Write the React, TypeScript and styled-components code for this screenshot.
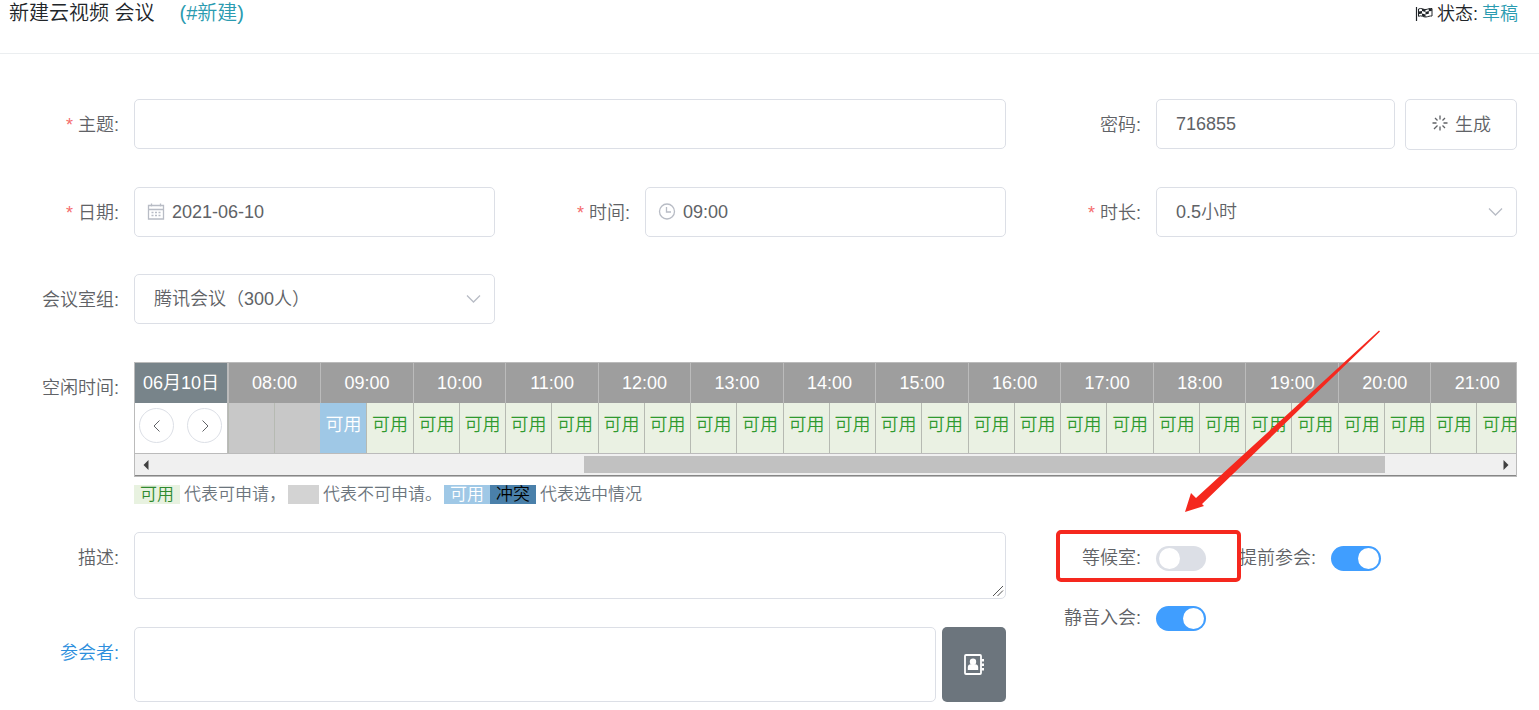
import React from "react";
import styled, { createGlobalStyle, css } from "styled-components";

const GlobalStyle = createGlobalStyle`
  *, *::before, *::after { box-sizing: border-box; }
  body {
    margin: 0;
    background: #fff;
    color: #606266;
    font-family: "Liberation Sans", "Noto Sans CJK SC", sans-serif;
    font-size: 18px;
    font-weight: 350;
  }
  input, select, textarea, button { font: inherit; color: inherit; }
`;

const Page = styled.div`
  position: relative;
  min-width: 1200px;
  overflow-x: hidden;
`;

const Header = styled.header`
  display: flex;
  justify-content: space-between;
  height: 54px;
  padding: 0 21px 0 9px;
  border-bottom: 1px solid #ebeef0;
  color: #212529;
  line-height: 26px;
`;

const Title = styled.h1`
  display: flex;
  gap: 25px;
  margin: 0;
  font-size: 20px;
  font-weight: 350;
`;

const Accent = styled.span`
  color: #2a9bb0;
`;

const Status = styled.div`
  display: flex;
  align-items: center;
  gap: 4px;
  height: 28px;
`;

const Form = styled.form`
  display: flex;
  flex-direction: column;
  padding: 45px 22px 8px 0;
`;

const Row = styled.div<{ $space?: number }>`
  display: grid;
  grid-template-columns: repeat(3, minmax(0, 1fr));
  column-gap: 16px;
  margin-bottom: ${(p) => p.$space ?? 37}px;
`;

const Field = styled.div<{ $span?: number }>`
  display: flex;
  align-items: flex-start;
  grid-column: span ${(p) => p.$span ?? 1};
`;

const Label = styled.label<{ $required?: boolean; $link?: boolean }>`
  flex: none;
  width: 134px;
  padding: 2px 15px 0 0;
  line-height: 48px;
  text-align: right;
  white-space: nowrap;
  ${(p) => p.$link && css`color: #2d8fdd;`}
  ${(p) =>
    p.$required &&
    css`
      &::before {
        content: "*";
        margin-right: 5px;
        color: #f56c6c;
      }
    `}
`;

const control = css`
  width: 100%;
  min-width: 0;
  border: 1px solid #dcdfe6;
  border-radius: 5px;
  background: #fff;
  outline: none;
`;

const TextInput = styled.input<{ $icon?: boolean }>`
  ${control}
  height: 50px;
  padding: 0 19px 0 ${(p) => (p.$icon ? 37 : 19)}px;
`;

const SelectInput = styled.select`
  ${control}
  height: 50px;
  padding: 0 44px 0 19px;
  appearance: none;
`;

const TextArea = styled.textarea<{ $tall?: boolean }>`
  ${control}
  display: block;
  height: ${(p) => (p.$tall ? 75 : 67)}px;
  padding: 6px 19px;
  resize: ${(p) => (p.$tall ? "none" : "vertical")};
  &::-webkit-resizer { background: transparent; }
`;

const ControlBox = styled.div`
  position: relative;
  flex: 1;
  min-width: 0;
`;

const InnerIcon = styled.svg<{ $end?: boolean }>`
  position: absolute;
  top: 16px;
  ${(p) => (p.$end ? "right: 13px;" : "left: 13px;")}
  fill: none;
  stroke: #b8bcc5;
  stroke-width: 1.3;
  pointer-events: none;
`;

const Grip = styled.svg`
  position: absolute;
  right: 2px;
  bottom: 2px;
  pointer-events: none;
`;

const GenerateButton = styled.button`
  display: flex;
  flex: none;
  align-items: center;
  justify-content: center;
  gap: 6px;
  width: 112px;
  height: 51px;
  margin-left: 10px;
  padding: 0 0 3px;
  border: 1px solid #dcdfe6;
  border-radius: 5px;
  background: #fff;
`;

const Scheduler = styled.div`
  flex: 1;
  min-width: 0;
`;

const Board = styled.div`
  border: 1px solid #bbb;
`;

const BoardBody = styled.div`
  display: flex;
  border-bottom: 1px solid #bbb;
`;

const DayColumn = styled.div`
  flex: none;
  width: 93px;
  border-right: 1px solid #bbb;
`;

const DayHead = styled.div`
  height: 40px;
  background: #78848a;
  color: #fff;
  font-weight: 400;
  line-height: 40px;
  text-align: center;
`;

const DayNav = styled.div`
  display: flex;
  gap: 13px;
  padding: 5px 4px;
`;

const RoundButton = styled.button`
  display: flex;
  flex: none;
  align-items: center;
  justify-content: center;
  width: 35px;
  height: 35px;
  padding: 0;
  border: 1px solid #dcdfe6;
  border-radius: 50%;
  background: #fff;
`;

const Timeline = styled.div`
  flex: 1;
  min-width: 0;
  overflow: hidden;
`;

const Slots = styled.table`
  width: 1295px;
  border-collapse: separate;
  border-spacing: 0;
  table-layout: fixed;
`;

const Col = styled.col<{ $w: number }>`
  width: ${(p) => p.$w}px;
`;

const HourHead = styled.th`
  height: 40px;
  padding: 0;
  border-left: 1px solid #bbb;
  background: #9e9e9e;
  color: #fff;
  font-weight: 400;
  line-height: 40px;
`;

type SlotState = "free" | "off" | "picked";

const slotColors: Record<SlotState, string> = {
  free: "background: #eaf1e3; color: #2f9a2f;",
  off: "background: #c8c8c8;",
  picked: "background: #9fc8e6; color: #fff; border-left-color: #9fc8e6;",
};

const Slot = styled.td<{ $state: SlotState }>`
  height: 50px;
  padding: 0 0 6px;
  overflow: hidden;
  border-left: 1px solid #b6bab2;
  line-height: 44px;
  text-align: center;
  white-space: nowrap;
  ${(p) => slotColors[p.$state]}
`;

const ScrollBar = styled.div`
  display: flex;
  height: 22px;
  border-bottom: 1px solid #868686;
  background: #f0f0f0;
`;

const ScrollArrow = styled.button`
  display: flex;
  flex: none;
  align-items: center;
  justify-content: center;
  width: 21px;
  padding: 0;
  border: 0;
  background: none;
`;

const ScrollTrack = styled.div`
  flex: 1;
  padding: 2px 0;
`;

const ScrollThumb = styled.div`
  width: 59.8%;
  height: 17px;
  margin-left: 32%;
  background: #c1c1c1;
`;

const Legend = styled.div`
  display: flex;
  align-items: center;
  margin-top: 8px;
  color: #6c757d;
  font-size: 17px;
  line-height: 19px;
`;

const Chip = styled.span<{ $kind: "free" | "off" | "picked" | "clash" }>`
  width: ${(p) => (p.$kind === "off" ? 31 : 46)}px;
  height: 19px;
  text-align: center;
  ${(p) =>
    ({
      free: "background: #e8f2e0; color: #2f8a2f;",
      off: "background: #d3d3d3;",
      picked: "background: #9fc8e6; color: #fff;",
      clash: "background: #4a80aa; color: #000;",
    })[p.$kind]}
`;

const LegendText = styled.span`
  margin: 0 2px 0 4px;
`;

const Stack = styled.div<{ $span?: number; $gap: number }>`
  display: flex;
  flex-direction: column;
  grid-column: span ${(p) => p.$span ?? 1};
  gap: ${(p) => p.$gap}px;
`;

const BookButton = styled.button`
  display: flex;
  flex: none;
  align-items: center;
  justify-content: center;
  width: 64px;
  height: 75px;
  margin-left: 6px;
  padding: 0;
  border: 0;
  border-radius: 5px;
  background: #6c757d;
`;

const SwitchRow = styled.div`
  position: relative;
  display: flex;
  align-items: flex-start;
  height: 52px;
`;

const SideLabel = styled(Label)`
  width: 125px;
`;

const Switch = styled.input`
  position: relative;
  flex: none;
  width: 50px;
  height: 25px;
  margin: 14px 0 0;
  border-radius: 13px;
  background: #dcdfe6;
  appearance: none;
  &::before {
    content: "";
    position: absolute;
    top: 2px;
    left: 3px;
    width: 21px;
    height: 21px;
    border-radius: 50%;
    background: #fff;
  }
  &:checked { background: #409eff; }
  &:checked::before { left: 27px; }
`;

const Highlight = styled.div`
  position: absolute;
  top: -2px;
  left: 34px;
  width: 185px;
  height: 52px;
  border: 4px solid #f5281e;
  border-radius: 5px;
  pointer-events: none;
`;

const Arrow = styled.svg`
  position: absolute;
  bottom: 72px;
  left: 163px;
  pointer-events: none;
`;

const hours = Array.from({ length: 14 }, (_, i) => `${String(i + 8).padStart(2, "0")}:00`);

const slotState = (i: number): SlotState => (i < 2 ? "off" : i === 2 ? "picked" : "free");

export default function App() {
  return (
    <Page>
      <GlobalStyle />
      <Header>
        <Title>
          <span>新建云视频 会议</span>
          <Accent>(#新建)</Accent>
        </Title>
        <Status>
          <svg width="18" height="16" viewBox="0 0 18 16" aria-hidden="true">
            <path d="M1.500 1v14" stroke="#212529" strokeWidth="1.200" />
            <path
              d="M3.500 3c3-1.600 5 1 7.500.5s3.500-1.200 6-1v7.500c-2.500-.2-3.500.6-6 1s-4.500-2.200-7.500-.7z"
              fill="#fff"
              stroke="#212529"
            />
            <path
              d="M7 2.700l3.500.8V6L7 5zM10.500 6l3.300-.9v2.600l-3.300.9zM3.500 5.500L7 5v2.500l-3.500.7zM7 7.500l3.500 1V11L7 9.800zM13.800 2.800l3-.3V5l-3 .2z"
              fill="#212529"
            />
          </svg>
          <span>状态:</span>
          <Accent>草稿</Accent>
        </Status>
      </Header>

      <Form onSubmit={(e) => e.preventDefault()}>
        <Row>
          <Field $span={2}>
            <Label htmlFor="topic" $required>主题:</Label>
            <TextInput id="topic" />
          </Field>
          <Field>
            <Label htmlFor="password">密码:</Label>
            <TextInput id="password" defaultValue="716855" />
            <GenerateButton type="button">
              <svg width="18" height="18" viewBox="0 0 18 18" fill="none" stroke="#606266" strokeWidth="1.300" aria-hidden="true">
                <path d="M9 1.500v4M9 12.500v4M1.500 9h4M12.500 9h4M4 4l2.500 2.500M11.500 11.500L14 14M3 15l3.500-3.500M11.500 6.500L14 4" />
              </svg>
              生成
            </GenerateButton>
          </Field>
        </Row>

        <Row>
          <Field>
            <Label htmlFor="date" $required>日期:</Label>
            <ControlBox>
              <TextInput id="date" $icon defaultValue="2021-06-10" />
              <InnerIcon width="18" height="18" viewBox="0 0 18 18">
                <path d="M1.500 2.500h15v13.500h-15zM1.500 6.500h15M4.500.5v3M13.500.5v3M7 2.500h4" />
                <path d="M4.500 9.500h2M8 9.500h2M11.500 9.500h2M4.500 12.500h2M8 12.500h2M11.500 12.500h2" />
              </InnerIcon>
            </ControlBox>
          </Field>
          <Field>
            <Label htmlFor="time" $required>时间:</Label>
            <ControlBox>
              <TextInput id="time" $icon defaultValue="09:00" />
              <InnerIcon width="18" height="18" viewBox="0 0 18 18">
                <circle cx="9" cy="8.500" r="7.500" />
                <path d="M8.500 4v5h4.500" />
              </InnerIcon>
            </ControlBox>
          </Field>
          <Field>
            <Label htmlFor="duration" $required>时长:</Label>
            <ControlBox>
              <SelectInput id="duration"><option>0.5小时</option></SelectInput>
              <InnerIcon $end width="18" height="18" viewBox="0 0 18 18">
                <path d="M3 5.500l6.500 6.500L16 5.500" />
              </InnerIcon>
            </ControlBox>
          </Field>
        </Row>

        <Row $space={38}>
          <Field>
            <Label htmlFor="group">会议室组:</Label>
            <ControlBox>
              <SelectInput id="group"><option>腾讯会议（300人）</option></SelectInput>
              <InnerIcon $end width="18" height="18" viewBox="0 0 18 18">
                <path d="M3 5.500l6.500 6.500L16 5.500" />
              </InnerIcon>
            </ControlBox>
          </Field>
        </Row>

        <Row $space={28}>
          <Field $span={3}>
            <Label as="span">空闲时间:</Label>
            <Scheduler>
              <Board>
                <BoardBody>
                  <DayColumn>
                    <DayHead>06月10日</DayHead>
                    <DayNav>
                      <RoundButton type="button" aria-label="前一天">
                        <svg width="16" height="16" fill="none" stroke="#606266"><path d="M10.500 2.500L5 8l5.500 5.500" /></svg>
                      </RoundButton>
                      <RoundButton type="button" aria-label="后一天">
                        <svg width="16" height="16" fill="none" stroke="#606266"><path d="M5.500 2.500L11 8l-5.500 5.500" /></svg>
                      </RoundButton>
                    </DayNav>
                  </DayColumn>
                  <Timeline>
                    <Slots>
                      <colgroup>
                        {hours.flatMap((h, i) => [
                          <Col key={`${h}a`} $w={46} />,
                          <Col key={`${h}b`} $w={i % 2 ? 47 : 46} />,
                        ])}
                      </colgroup>
                      <thead>
                        <tr>{hours.map((h) => <HourHead key={h} colSpan={2}>{h}</HourHead>)}</tr>
                      </thead>
                      <tbody>
                        <tr>
                          {hours.flatMap((h, i) =>
                            [i * 2, i * 2 + 1].map((n) => (
                              <Slot key={n} $state={slotState(n)}>{slotState(n) === "off" ? "" : "可用"}</Slot>
                            )),
                          )}
                        </tr>
                      </tbody>
                    </Slots>
                  </Timeline>
                </BoardBody>
                <ScrollBar>
                  <ScrollArrow type="button" aria-label="向左滚动">
                    <svg width="6" height="10"><path d="M5.500 0v10L.5 5z" fill="#404040" /></svg>
                  </ScrollArrow>
                  <ScrollTrack><ScrollThumb /></ScrollTrack>
                  <ScrollArrow type="button" aria-label="向右滚动">
                    <svg width="6" height="10"><path d="M.5 0v10l5-5z" fill="#404040" /></svg>
                  </ScrollArrow>
                </ScrollBar>
              </Board>
              <Legend>
                <Chip $kind="free">可用</Chip>
                <LegendText>代表可申请，</LegendText>
                <Chip $kind="off" />
                <LegendText>代表不可申请。</LegendText>
                <Chip $kind="picked">可用</Chip>
                <Chip $kind="clash">冲突</Chip>
                <LegendText>代表选中情况</LegendText>
              </Legend>
            </Scheduler>
          </Field>
        </Row>

        <Row $space={0}>
          <Stack $span={2} $gap={28}>
            <Field>
              <Label htmlFor="description">描述:</Label>
              <ControlBox>
                <TextArea id="description" />
                <Grip width="12" height="12" viewBox="0 0 12 12" aria-hidden="true">
                  <path d="M1 11L11 1M5.500 11L11 5.500" stroke="#555" fill="none" />
                </Grip>
              </ControlBox>
            </Field>
            <Field>
              <Label htmlFor="members" $link>参会者:</Label>
              <TextArea id="members" $tall />
              <BookButton type="button" aria-label="通讯录">
                <svg width="22" height="22" viewBox="0 0 22 22" aria-hidden="true">
                  <rect x="2" y="1" width="16" height="19" rx="1" fill="none" stroke="#fff" strokeWidth="1.800" />
                  <circle cx="10" cy="7.800" r="3.200" fill="#fff" />
                  <path d="M4.800 16v-2.500c0-2 1.200-3.200 3-3.200h4.400c1.800 0 3 1.200 3 3.200V16z" fill="#fff" />
                  <path d="M18.500 5H21v2.500h-2.500zM18.500 9.500H21V12h-2.500zM18.500 14H21v2.500h-2.500z" fill="#fff" />
                </svg>
              </BookButton>
            </Field>
          </Stack>
          <Stack $gap={8}>
            <SwitchRow>
              <Label htmlFor="waiting">等候室:</Label>
              <Switch id="waiting" type="checkbox" />
              <SideLabel htmlFor="early">提前参会:</SideLabel>
              <Switch id="early" type="checkbox" defaultChecked />
              <Highlight />
              <Arrow width="198" height="184" viewBox="0 0 198 184" aria-hidden="true">
                <path d="M0 184L6 165l5 5L194 2.500l1 1L17 176l2 2z" fill="#f5281e" />
              </Arrow>
            </SwitchRow>
            <SwitchRow>
              <Label htmlFor="muted">静音入会:</Label>
              <Switch id="muted" type="checkbox" defaultChecked />
            </SwitchRow>
          </Stack>
        </Row>
      </Form>
    </Page>
  );
}
